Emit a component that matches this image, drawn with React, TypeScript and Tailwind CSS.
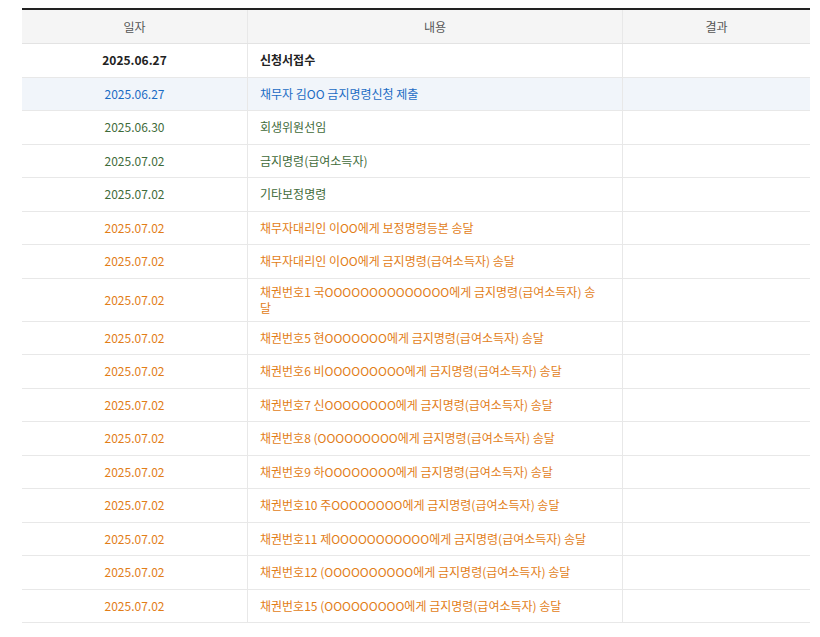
import React from "react";

const rows: [string, string, string][] = [
  ["2025.06.27", "신청서접수", "k"],
  ["2025.06.27", "채무자 김OO 금지명령신청 제출", "b"],
  ["2025.06.30", "회생위원선임", "g"],
  ["2025.07.02", "금지명령(급여소득자)", "g"],
  ["2025.07.02", "기타보정명령", "g"],
  ["2025.07.02", "채무자대리인 이OO에게 보정명령등본 송달", "o"],
  ["2025.07.02", "채무자대리인 이OO에게 금지명령(급여소득자) 송달", "o"],
  ["2025.07.02", "채권번호1 국OOOOOOOOOOOOOO에게 금지명령(급여소득자) 송달", "o"],
  ["2025.07.02", "채권번호5 현OOOOOOO에게 금지명령(급여소득자) 송달", "o"],
  ["2025.07.02", "채권번호6 비OOOOOOOOO에게 금지명령(급여소득자) 송달", "o"],
  ["2025.07.02", "채권번호7 신OOOOOOOO에게 금지명령(급여소득자) 송달", "o"],
  ["2025.07.02", "채권번호8 (OOOOOOOOO에게 금지명령(급여소득자) 송달", "o"],
  ["2025.07.02", "채권번호9 하OOOOOOOO에게 금지명령(급여소득자) 송달", "o"],
  ["2025.07.02", "채권번호10 주OOOOOOOO에게 금지명령(급여소득자) 송달", "o"],
  ["2025.07.02", "채권번호11 제OOOOOOOOOOO에게 금지명령(급여소득자) 송달", "o"],
  ["2025.07.02", "채권번호12 (OOOOOOOOOO에게 금지명령(급여소득자) 송달", "o"],
  ["2025.07.02", "채권번호15 (OOOOOOOOO에게 금지명령(급여소득자) 송달", "o"],
];

const color: Record<string, string> = {
  k: "text-[#222] font-bold",
  b: "text-[#1b6cc4]",
  g: "text-[#3f6b3a]",
  o: "text-[#e27d17]",
};

export default function App() {
  return (
    <div className="w-[820px] h-[637px] bg-white pt-2 px-[22px] overflow-hidden text-[12px]" style={{ fontFamily: '"Noto Sans CJK KR", "Noto Sans", sans-serif' }}>
      <div className="w-[788px] border-t-2 border-[#222]">
        <div className="grid grid-cols-[226px_375px_187px] bg-[#f5f5f5] border-b border-[#e3e3e3] h-[34px] text-[#555]">
          <div className="flex items-center justify-center border-r border-[#e8e8e8]">일자</div>
          <div className="flex items-center justify-center border-r border-[#e8e8e8]">내용</div>
          <div className="flex items-center justify-center">결과</div>
        </div>
        {rows.map(([d, c, k], i) => (
          <div key={i} className={`grid grid-cols-[226px_375px_187px] border-b border-[#e8e8e8] min-h-[33.5px] ${k === "b" ? "bg-[#f1f5fa]" : ""} ${color[k]}`}>
            <div className="flex items-center justify-center border-r border-[#e8e8e8]">{d}</div>
            <div className="flex items-center pl-[12px] pr-[20px] py-[5px] leading-[16px] border-r border-[#e8e8e8]">{c}</div>
            <div></div>
          </div>
        ))}
      </div>
    </div>
  );
}
